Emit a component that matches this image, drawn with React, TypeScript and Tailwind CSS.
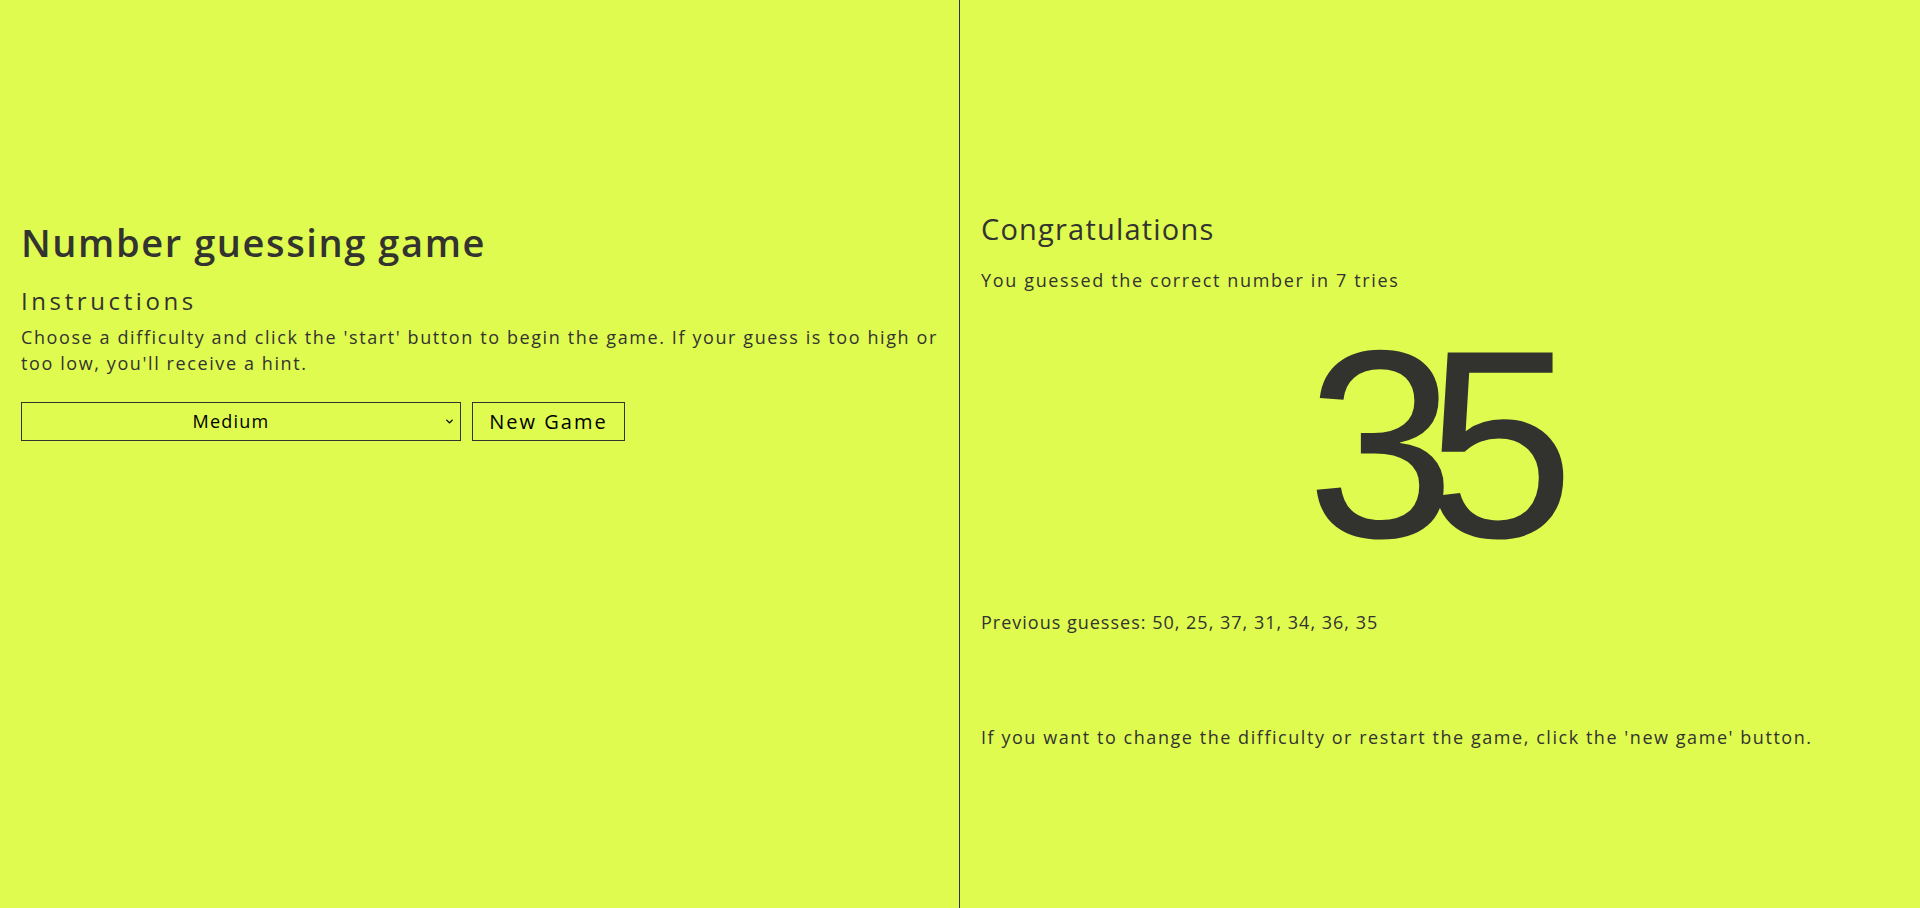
import { ChevronDown } from 'lucide-react';

const guesses = [50, 25, 37, 31, 34, 36, 35];

export default function App() {
  return (
    <div
      className="flex h-[908px] w-full bg-[#dffb4f] text-[#333330]"
      style={{ fontFamily: '"Open Sans", "DejaVu Sans", sans-serif' }}
    >
      {/* left: game controls */}
      <div className="w-[959px] px-[21px] pt-[220px]">
        <h1 className="text-[38px] font-semibold leading-[44px] tracking-[1.6px]">Number guessing game</h1>
        <h2 className="mt-[22px] text-[24px] leading-[30px] tracking-[3.6px]">Instructions</h2>
        <p className="mt-[8px] text-[18px] leading-[26px] tracking-[1.6px]">
          Choose a difficulty and click the 'start' button to begin the game. If your guess is too high or too
          low, you'll receive a hint.
        </p>
        <div className="mt-[26px] flex items-center gap-[11px]">
          <div className="relative h-[39px] w-[440px]">
            <select
              defaultValue="medium"
              className="h-full w-full appearance-none border border-[#333330] bg-transparent pr-[20px] text-center text-[18px] tracking-[1.2px] text-black outline-none [text-align-last:center]"
            >
              <option value="easy">Easy</option>
              <option value="medium">Medium</option>
              <option value="hard">Hard</option>
            </select>
            <ChevronDown
              className="pointer-events-none absolute right-[6px] top-[14px] h-[11px] w-[11px] text-black"
              strokeWidth={3}
            />
          </div>
          <button className="h-[39px] w-[153px] border border-[#333330] text-[20px] tracking-[2px] text-black">
            New Game
          </button>
        </div>
      </div>

      {/* right: result */}
      <div className="flex flex-1 flex-col border-l border-[#333330] px-[21px] pt-[210px]">
        <h2 className="text-[29px] leading-[38px] tracking-[1.2px]">Congratulations</h2>
        <p className="mt-[20px] text-[18px] leading-[24px] tracking-[1.65px]">
          You guessed the correct number in 7 tries
        </p>
        <div className="mt-[18px] flex justify-center pr-[29px]">
          <span className="font-['Liberation_Sans',sans-serif] text-[268px] leading-none tracking-[-30px] text-[#32332e]">
            35
          </span>
        </div>
        <p className="mt-[32px] text-[18px] leading-[24px] tracking-[1px]">Previous guesses: {guesses.join(', ')}</p>
        <p className="mt-[91px] text-[18px] leading-[24px] tracking-[1.55px]">
          If you want to change the difficulty or restart the game, click the 'new game' button.
        </p>
      </div>
    </div>
  );
}
